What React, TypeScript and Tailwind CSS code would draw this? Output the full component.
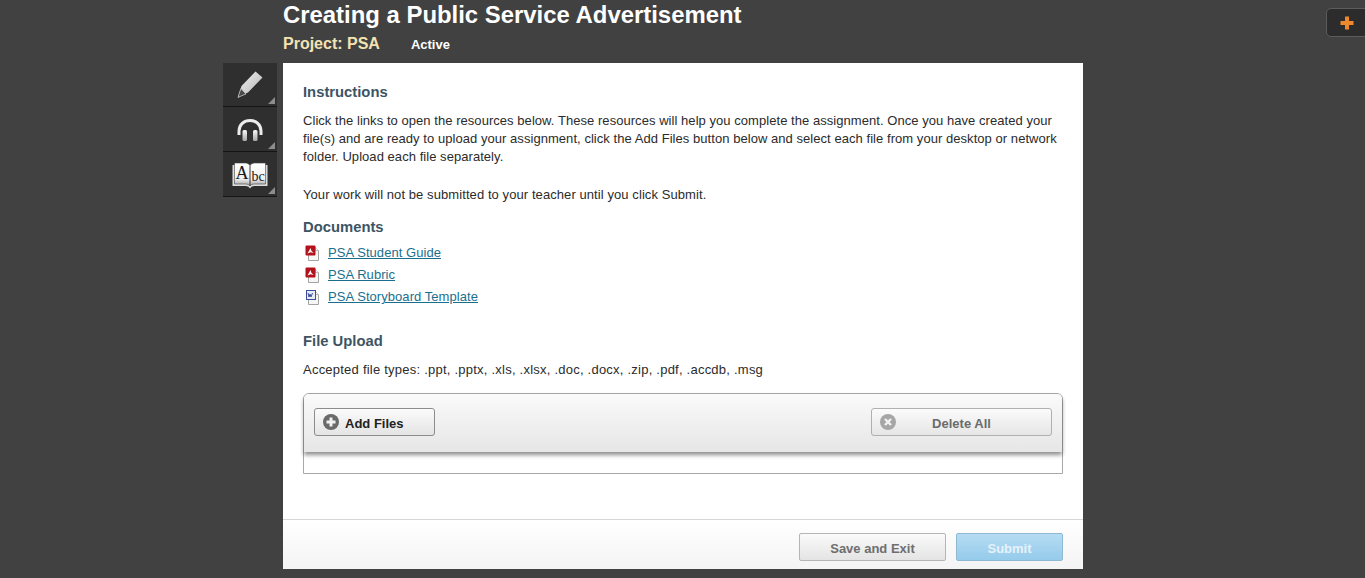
const FONT = 'font-["Liberation_Sans",Arial,sans-serif]'

function PdfIcon() {
  return (
    <svg width="16" height="16" viewBox="0 0 16 16" className="shrink-0">
      <path d="M4.500 2.500h7l3 3v10h-10z" fill="#f6f6f6" stroke="#a3a3a3" />
      <path d="M11.500 2.500v3h3" fill="#fff" stroke="#bdbdbd" />
      <rect x="1.500" y="0.500" width="10" height="10" rx="1" fill="#b3121c" />
      <path d="M3.500 8.500 6.500 3l1 3 2.200 2-3.200-.8z" fill="#fff" />
    </svg>
  )
}

function WordIcon() {
  return (
    <svg width="16" height="16" viewBox="0 0 16 16" className="shrink-0">
      <path d="M4.500 2.500h7l3 3v10h-10z" fill="#f6f6f6" stroke="#a3a3a3" />
      <path d="M11.500 2.500v3h3" fill="#fff" stroke="#bdbdbd" />
      <rect x="2.500" y="1.500" width="9" height="9" fill="#e8ecf6" stroke="#3c4f9a" />
      <path d="M4 4l1 4 1-3 1 3 1.500-4" fill="none" stroke="#2c3f8f" strokeWidth="0.9" />
    </svg>
  )
}

function PencilIcon() {
  return (
    <svg width="26" height="27" viewBox="0 0 26 27">
      <defs>
        <linearGradient id="pencilFill" x1="0" y1="0" x2="1" y2="1">
          <stop offset="0" stopColor="#f5f5f5" />
          <stop offset="1" stopColor="#b0b0b0" />
        </linearGradient>
      </defs>
      <path d="M18.500 0.500 25.500 6.500 11 21.500 5 24 1 26.500l1.500-5L4.500 15z" fill="url(#pencilFill)" />
      <path d="M4 17.500 9 23l-4.500 1.800L1 26.500l1.500-5z" fill="#4a4a4a" stroke="#d8d8d8" strokeWidth="0.7" />
    </svg>
  )
}

function HeadphonesIcon() {
  return (
    <svg width="26" height="23" viewBox="0 0 26 23">
      <defs>
        <linearGradient id="phoneFill" x1="0" y1="0" x2="0" y2="1">
          <stop offset="0" stopColor="#f8f8f8" />
          <stop offset="1" stopColor="#a6a6a6" />
        </linearGradient>
      </defs>
      <path d="M2 16V12C2 5.500 7 1.500 13 1.500S24 5.500 24 12v4" fill="none" stroke="#ececec" strokeWidth="3" />
      <rect x="5.500" y="11" width="4.500" height="11" rx="1.500" fill="url(#phoneFill)" />
      <rect x="16" y="11" width="4.500" height="11" rx="1.500" fill="url(#phoneFill)" />
    </svg>
  )
}

function DictionaryIcon() {
  return (
    <svg width="36" height="27" viewBox="0 0 36 27">
      <defs>
        <linearGradient id="bookFill" x1="0" y1="0" x2="0" y2="1">
          <stop offset="0" stopColor="#ffffff" />
          <stop offset="0.7" stopColor="#f0f0f0" />
          <stop offset="1" stopColor="#a0a0a0" />
        </linearGradient>
      </defs>
      <path d="M0.500 3v21h13c2 0 3.500.8 4.500 2.500 1-1.700 2.500-2.500 4.500-2.500h13V3z" fill="#dcdcdc" />
      <path d="M2.500 1h11c2 0 3.500 1 4.500 2.500C19 2 20.500 1 22.500 1h11v21h-11c-2 0-3.500.7-4.500 1.800-1-1.100-2.500-1.800-4.500-1.800h-11z" fill="url(#bookFill)" stroke="#444" strokeWidth="0.6" />
      <path d="M18 3.500v20.500" stroke="#222" strokeWidth="0.9" />
      <text x="10" y="17" textAnchor="middle" fontSize="18" fontFamily="Liberation Serif, serif" fill="#1a1a1a">A</text>
      <text x="26" y="19" textAnchor="middle" fontSize="14" fontFamily="Liberation Serif, serif" fill="#1a1a1a">bc</text>
    </svg>
  )
}

const TOOLS = [
  { id: 'notes', icon: <PencilIcon />, className: 'h-[44px]' },
  { id: 'audio', icon: <HeadphonesIcon />, className: 'h-[45px] pt-[3px]' },
  { id: 'dictionary', icon: <DictionaryIcon />, className: 'h-[45px] pt-[3px]' },
]

const DOCS = [
  { name: 'PSA Student Guide', icon: <PdfIcon /> },
  { name: 'PSA Rubric', icon: <PdfIcon /> },
  { name: 'PSA Storyboard Template', icon: <WordIcon /> },
]

export default function App() {
  return (
    <div className={`${FONT} relative h-[578px] overflow-hidden bg-[#414141] text-[13px] text-[#2b2b2b]`}>
      <button
        type="button"
        aria-label="Open menu"
        className="absolute top-[8px] right-[-4px] flex h-[29px] w-[43px] items-center justify-start rounded-[5px] border border-[#5c5c5c] bg-[#2c2c2c] pl-[13px]"
      >
        <svg width="14" height="14" viewBox="0 0 14 14">
          <path d="M5 0.500h4V5h4.500v4H9v4.500H5V9H0.500V5H5z" fill="#ee8a2c" />
        </svg>
      </button>

      <div className="grid grid-cols-[283px_800px_1fr]">
        <div className="flex justify-end pt-[63px] pr-[6px]">
          <div className="w-[54px]">
            {TOOLS.map((tool) => (
              <div
                key={tool.id}
                className={`relative flex ${tool.className} items-center justify-center border-b border-[#151515] bg-[#2f2f2f]`}
              >
                {tool.icon}
                <span className="absolute right-[2px] bottom-[2px] h-0 w-0 border-b-[7px] border-l-[7px] border-b-[#8c8c8c] border-l-transparent" />
              </div>
            ))}
          </div>
        </div>

        <div>
          <h1 className="h-[31px] text-[23.900px] leading-[29px] font-bold text-white">
            Creating a Public Service Advertisement
          </h1>
          <div className="flex h-[25px] items-center">
            <span className="text-[16px] font-bold text-[#f3e3b3]">Project: PSA</span>
            <span className="ml-[31px] pt-[2px] text-[13px] font-bold text-white">Active</span>
          </div>

          <main className="mt-[7px] flex h-[506px] flex-col bg-white">
            <div className="flex-1 px-[20px] pt-[20px]">
              <h2 className="text-[14.800px] leading-[18px] font-bold text-[#3d5464]">Instructions</h2>
              <p className="mt-[11px] leading-[18px] tracking-[0.05px]">
                Click the links to open the resources below. These resources will help you complete the assignment. Once you have created your file(s) and are ready to upload your assignment, click the Add Files button below and select each file from your desktop or network folder. Upload each file separately.
              </p>
              <p className="mt-[20px] leading-[18px] tracking-[0.08px]">
                Your work will not be submitted to your teacher until you click Submit.
              </p>

              <h2 className="mt-[14px] text-[14.800px] leading-[18px] font-bold text-[#3d5464]">Documents</h2>
              <ul className="mt-[6px] tracking-[0.06px]">
                {DOCS.map((doc) => (
                  <li key={doc.name} className="flex h-[22px] items-center">
                    <span className="w-[25px] pl-[1px]">{doc.icon}</span>
                    <a href="#" className="text-[#1b6f8e] underline">
                      {doc.name}
                    </a>
                  </li>
                ))}
              </ul>

              <h2 className="mt-[24px] text-[14.800px] leading-[18px] font-bold text-[#3d5464]">File Upload</h2>
              <p className="mt-[11px] leading-[18px] tracking-[0.23px]">
                Accepted file types: .ppt, .pptx, .xls, .xlsx, .doc, .docx, .zip, .pdf, .accdb, .msg
              </p>

              <div className="mt-[14px] h-[81px] rounded-t-[6px] border border-[#a8a8a8]">
                <div className="flex h-[58px] items-center justify-between rounded-t-[5px] bg-gradient-to-b from-[#fafafa] to-[#e6e6e6] px-[10px] pb-[2px] shadow-[0_3px_4px_rgba(0,0,0,0.45)]">
                  <button
                    type="button"
                    className="flex h-[28px] w-[121px] items-center rounded-[3px] border border-[#8c8c8c] bg-gradient-to-b from-[#fbfbfb] to-[#e4e4e4] pl-[8px] text-[13px] font-bold text-[#222]"
                  >
                    <svg width="16" height="16" viewBox="0 0 16 16" className="mr-[6px]">
                      <circle cx="8" cy="8" r="8" fill="#6a6a6a" />
                      <path d="M6.500 3.500h3v3h3v3h-3v3h-3v-3h-3v-3h3z" fill="#f2f2f2" />
                    </svg>
                    <span className="pt-[3px]">Add Files</span>
                  </button>
                  <button
                    type="button"
                    className="relative flex h-[28px] w-[181px] items-center justify-center rounded-[3px] border border-[#b0b0b0] bg-gradient-to-b from-[#fbfbfb] to-[#e6e6e6] pt-[3px] text-[13px] font-bold text-[#6b6b6b]"
                  >
                    <svg width="16" height="16" viewBox="0 0 16 16" className="absolute top-[5px] left-[8px]">
                      <circle cx="8" cy="8" r="8" fill="#a6a6a6" />
                      <path d="M5 5l6 6M11 5l-6 6" stroke="#f2f2f2" strokeWidth="2.400" />
                    </svg>
                    Delete All
                  </button>
                </div>
              </div>
            </div>

            <footer className="flex h-[50px] items-start justify-end gap-[10px] border-t border-[#d6d6d6] bg-gradient-to-b from-white to-[#f4f4f4] pt-[13px] pr-[20px]">
              <button
                type="button"
                className="h-[28px] w-[147px] rounded-[2px] border border-[#b5b5b5] bg-gradient-to-b from-[#fafafa] to-[#e4e4e4] pt-[3px] text-[13px] font-bold text-[#6e6e6e]"
              >
                Save and Exit
              </button>
              <button
                type="button"
                className="h-[28px] w-[107px] rounded-[2px] border border-[#8fb9d2] bg-gradient-to-b from-[#b5dcf3] to-[#95cbeb] pt-[3px] text-[13px] font-bold text-[#e6f2f9]"
              >
                Submit
              </button>
            </footer>
          </main>
        </div>

        <div />
      </div>
    </div>
  )
}
